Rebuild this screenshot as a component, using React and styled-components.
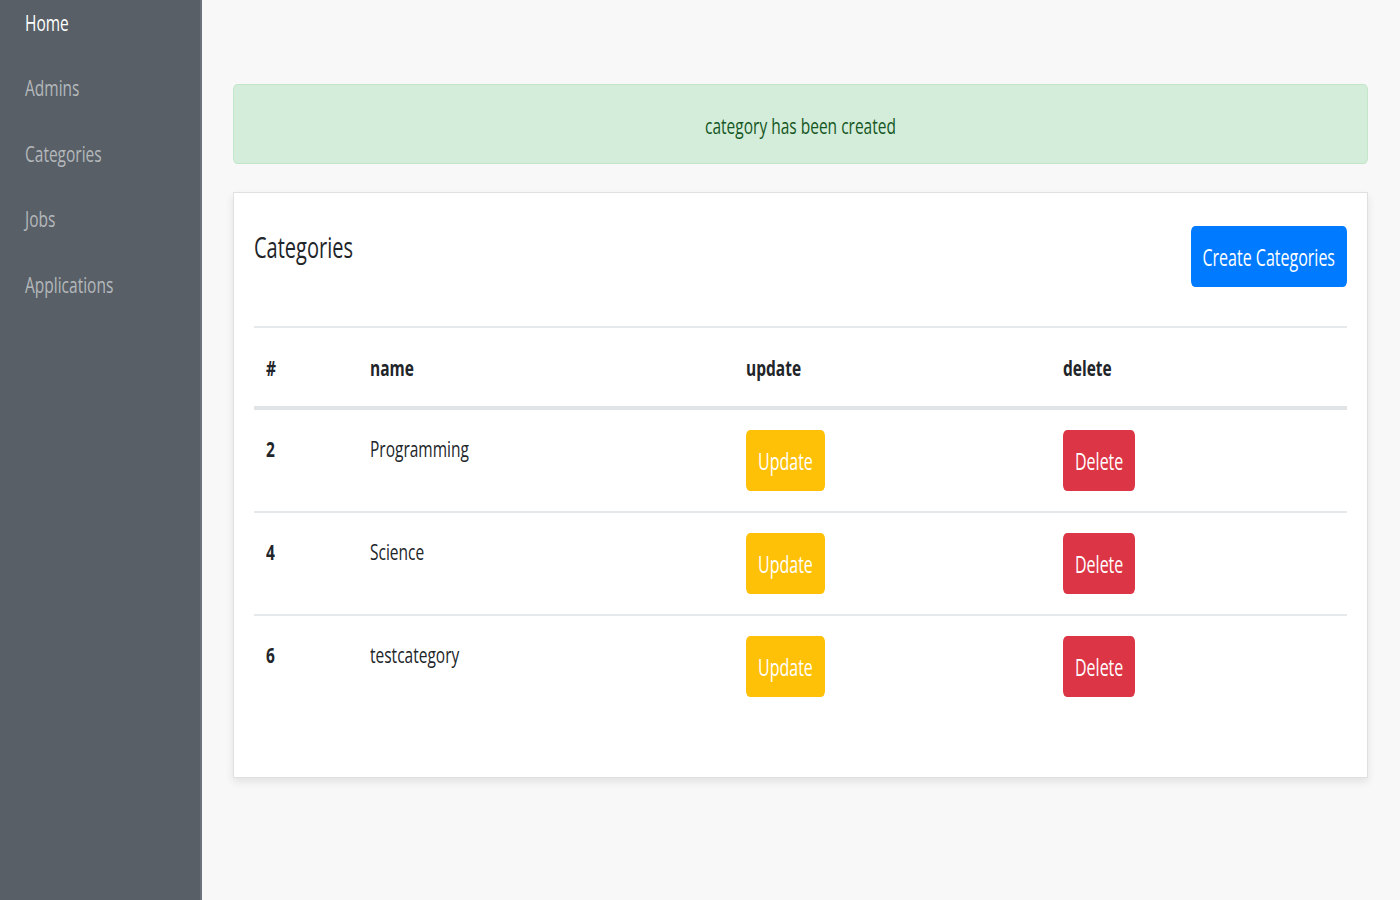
import React from 'react'
import styled, { createGlobalStyle } from 'styled-components'

const GlobalStyle = createGlobalStyle`
  html, body {
    margin: 0;
    padding: 0;
    background: #f8f8f8;
    font-family: "Open Sans", "Noto Sans", "Liberation Sans", sans-serif;
    font-size: 15.5px;
    color: #212529;
  }
  * { box-sizing: border-box; }
`

// the screenshot is stretched vertically, so every text run is stretched too
const Tall = styled.span`
  display: inline-block;
  transform: scaleY(1.42);
  transform-origin: center;
  white-space: nowrap;
`

const Layout = styled.div`
  display: grid;
  grid-template-columns: 202px 1fr;
  min-height: 100vh;
`

const Sidebar = styled.nav`
  background: #585f67;
  border-right: 2px solid #6d737a;
  display: flex;
  flex-direction: column;
  gap: 25.4px;
  padding: 2px 0 0 25px;
`

const NavItem = styled.a`
  display: block;
  line-height: 40px;
  color: ${p => (p.$active ? '#ffffff' : 'rgba(255, 255, 255, 0.56)')};
  text-decoration: none;
`

const Main = styled.main`
  padding: 84px 32px 40px 31px;
  display: flex;
  flex-direction: column;
  gap: 28px;
`

const Alert = styled.div`
  height: 80px;
  padding-top: 2px;
  background: #d4edda;
  border: 1px solid #c3e6cb;
  border-radius: 4px / 6px;
  color: #155724;
  display: flex;
  align-items: center;
  justify-content: center;
`

const Card = styled.section`
  background: #fff;
  border: 1px solid #e0e0e0;
  box-shadow: 0 4px 8px rgba(0, 0, 0, 0.09);
  padding: 33px 20px 33px 20px;
`

const CardHeader = styled.div`
  display: flex;
  justify-content: space-between;
  align-items: flex-start;
  margin-bottom: 39px;
`

const Title = styled.h5`
  margin: 2px 0 0;
  font-size: 20px;
  font-weight: 400;
  line-height: 39px;
  color: #212529;
`

const Button = styled.button`
  height: 61px;
  padding: 0 12px;
  border: none;
  border-radius: 4px / 6px;
  font-family: inherit;
  font-size: 16px;
  color: #fff;
  background: ${p => p.$bg};
  cursor: pointer;
`

const Table = styled.div`
  border-top: 2px solid #e6e9ec;
  margin-bottom: 27px;
`

const Row = styled.div`
  display: grid;
  grid-template-columns: 104px 376px 317px 1fr;
  border-top: ${p => (p.$first ? 'none' : '2px solid #e6e9ec')};
`

const HeadRow = styled(Row)`
  border-top: none;
  border-bottom: 4px solid #e1e4e7;
`

const Cell = styled.div`
  padding: ${p => (p.$head ? '21px 12px 18px' : '20px 12px')};
  line-height: 39px;
  font-weight: ${p => (p.$bold ? 700 : 400)};
  color: #212529;
`

const rows = [
  { id: 2, name: 'Programming' },
  { id: 4, name: 'Science' },
  { id: 6, name: 'testcategory' },
]

const links = ['Home', 'Admins', 'Categories', 'Jobs', 'Applications']

export default function App() {
  return (
    <>
      <GlobalStyle />
      <Layout>
        <Sidebar>
          {links.map((l, i) => (
            <NavItem key={l} href="#" $active={i === 0}>
              <Tall>{l}</Tall>
            </NavItem>
          ))}
        </Sidebar>
        <Main>
          <Alert>
            <Tall>category has been created</Tall>
          </Alert>
          <Card>
            <CardHeader>
              <Title>
                <Tall>Categories</Tall>
              </Title>
              <Button $bg="#007bff">
                <Tall>Create Categories</Tall>
              </Button>
            </CardHeader>
            <Table>
              <HeadRow>
                <Cell $head $bold><Tall>#</Tall></Cell>
                <Cell $head $bold><Tall>name</Tall></Cell>
                <Cell $head $bold><Tall>update</Tall></Cell>
                <Cell $head $bold><Tall>delete</Tall></Cell>
              </HeadRow>
              {rows.map((r, i) => (
                <Row key={r.id} $first={i === 0}>
                  <Cell $bold><Tall>{r.id}</Tall></Cell>
                  <Cell><Tall>{r.name}</Tall></Cell>
                  <Cell>
                    <Button $bg="#ffc107"><Tall>Update</Tall></Button>
                  </Cell>
                  <Cell>
                    <Button $bg="#dc3545"><Tall>Delete</Tall></Button>
                  </Cell>
                </Row>
              ))}
            </Table>
          </Card>
        </Main>
      </Layout>
    </>
  )
}
